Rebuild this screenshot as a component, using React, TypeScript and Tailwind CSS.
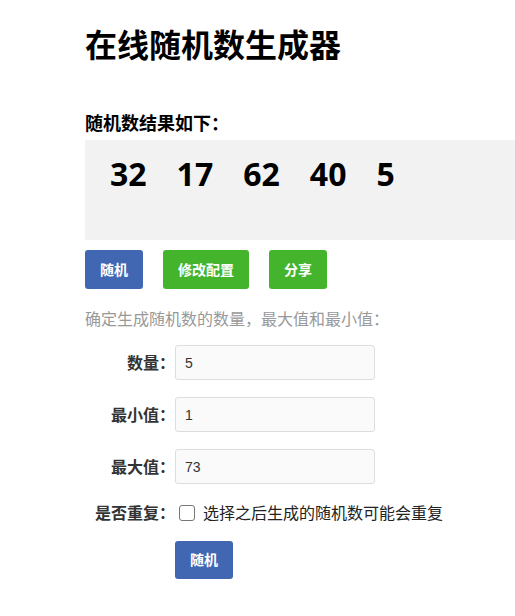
const numbers = [32, 17, 62, 40, 5];

const fields = [
  { label: '数量：', value: '5' },
  { label: '最小值：', value: '1' },
  { label: '最大值：', value: '73' },
];

export default function App() {
  return (
    <div className="min-h-screen bg-white pl-[85px] pt-[29px] text-black font-['Noto_Sans','Noto_Sans_CJK_SC',sans-serif]">
      <h1 className="text-[32px] leading-[32px] font-bold">在线随机数生成器</h1>

      <h2 className="mt-[53px] text-[18px] leading-[18px] font-bold">随机数结果如下：</h2>

      {/* 结果 */}
      <div className="mt-[8px] h-[100px] bg-[#f2f2f2] pl-[25px] pt-[18px] flex gap-[30px]">
        {numbers.map((n) => (
          <span key={n} className="text-[32px] leading-[32px] font-bold">{n}</span>
        ))}
      </div>

      <div className="mt-[10px] flex gap-[20px]">
        <button className="h-[39px] px-[15px] rounded-[3px] bg-[#4267b2] text-white text-sm font-bold">随机</button>
        <button className="h-[39px] px-[15px] rounded-[3px] bg-[#44b42c] text-white text-sm font-bold">修改配置</button>
        <button className="h-[39px] px-[15px] rounded-[3px] bg-[#44b42c] text-white text-sm font-bold">分享</button>
      </div>

      <p className="mt-[22px] text-[16px] leading-[16px] text-[#999]">确定生成随机数的数量，最大值和最小值：</p>

      <div className="mt-[18px] flex flex-col gap-[17px]">
        {fields.map((f) => (
          <div key={f.label} className="flex items-center">
            <label className="w-[90px] text-right text-[16px] font-bold text-[#333]">{f.label}</label>
            <input
              defaultValue={f.value}
              className="w-[200px] h-[35px] px-[9px] rounded-[3px] border border-[#ddd] bg-[#fafafa] text-sm text-[#333] outline-none font-['Liberation_Sans',sans-serif]"
            />
          </div>
        ))}
      </div>

      <div className="mt-[19px] flex items-center h-[20px]">
        <span className="w-[90px] text-right text-[16px] font-bold text-[#333]">是否重复：</span>
        <input type="checkbox" className="ml-[4px] w-4 h-4 appearance-none rounded-[3px] border border-[#767676] bg-white" />
        <span className="ml-[8px] text-[16px] text-[#222]">选择之后生成的随机数可能会重复</span>
      </div>

      <button className="mt-[18px] ml-[90px] h-[38px] px-[15px] rounded-[3px] bg-[#4267b2] text-white text-sm font-bold">随机</button>
    </div>
  );
}
